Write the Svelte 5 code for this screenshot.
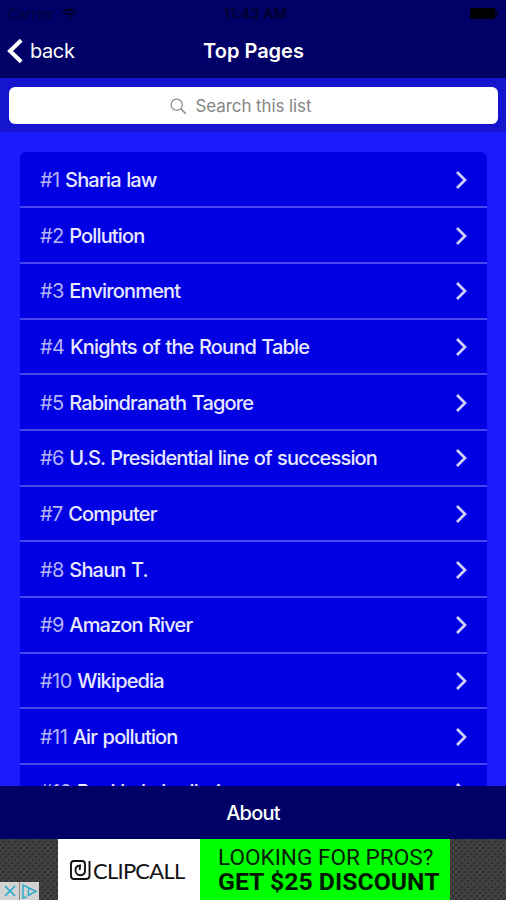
<script lang="ts">
	const pages = [
		'Sharia law',
		'Pollution',
		'Environment',
		'Knights of the Round Table',
		'Rabindranath Tagore',
		'U.S. Presidential line of succession',
		'Computer',
		'Shaun T.',
		'Amazon River',
		'Wikipedia',
		'Air pollution',
		'Rani Lakshmibai'
	];
</script>

<div class="app">
	<header>
		<div class="status">
			<div class="carrier">
				<span>Carrier</span>
				<svg width="15" height="11" viewBox="0 0 15 11">
					<path d="M0 3.4Q7.5-3 15 3.4L13.3 5.2Q7.5.4 1.7 5.2ZM2.8 6.2Q7.5 2.4 12.2 6.2L10.5 8Q7.5 5.7 4.5 8ZM5.5 8.9Q7.5 7.4 9.5 8.9L7.5 11Z" />
				</svg>
			</div>
			<span class="time">11:43 AM</span>
			<svg class="battery" width="28" height="11" viewBox="0 0 28 11">
				<rect width="25.5" height="11" rx="2" />
				<path d="M26 3.5q2 .6 2 2t-2 2z" />
			</svg>
		</div>
		<nav>
			<button class="back">
				<svg width="17" height="27" viewBox="0 0 17 27">
					<path d="M15.2 2.2 4 13 15.2 23.8" fill="none" stroke="#fff" stroke-width="4" />
				</svg>
				<span>back</span>
			</button>
			<h1>Top Pages</h1>
		</nav>
	</header>

	<div class="search">
		<div class="field">
			<svg width="17" height="17" viewBox="0 0 17 17" fill="none" stroke="#858585">
				<circle cx="6.7" cy="6.7" r="5.6" stroke-width="1.2" />
				<path d="m10.8 10.8 5 5" stroke-width="1.6" />
			</svg>
			<span>Search this list</span>
		</div>
	</div>

	<main>
		<ul>
			{#each pages as page, i (page)}
				<li>
					<span class="label"><span class="rank">#{i + 1}</span> {page}</span>
					<svg width="13" height="20" viewBox="0 0 13 20">
						<path d="m2 2 8 8-8 8" fill="none" stroke="#d0d0f8" stroke-width="2.7" />
					</svg>
				</li>
			{/each}
		</ul>
	</main>

	<footer>About</footer>

	<aside>
		<div class="mesh left">
			<div class="choices">
				<svg width="19" height="18" viewBox="0 0 19 18" fill="none" stroke="#22a9cc" stroke-width="1.6">
					<path d="m5 4 10 10M15 4 5 14" />
				</svg>
				<svg width="19" height="18" viewBox="0 0 19 18" fill="none" stroke="#22a9cc" stroke-width="1.4">
					<path d="M6.5 15 3 16V3l13 6.3-7.5 4V6.5" />
				</svg>
			</div>
		</div>
		<div class="brand">
			<svg width="21" height="21" viewBox="0 0 21 21" fill="none" stroke="#111" stroke-width="1.9">
				<path d="M19.5 1v15q0 3-3.5 3H4q-3 0-3-3V4q0-3 3-3h8q3 0 3 3v6.5c0 3-2 4.7-4.8 4.7S5.5 13 5.5 10.3s1.6-4.6 4.6-4.8c-.2 2-.6 3-.2 4.6" />
			</svg>
			<span>CLIPCALL</span>
		</div>
		<div class="offer">
			<span class="ask">LOOKING FOR PROS?</span>
			<span class="deal">GET $25 DISCOUNT</span>
		</div>
		<div class="mesh right"></div>
	</aside>
</div>

<style>
	:global(body) {
		margin: 0;
	}

	.app {
		display: flex;
		flex-direction: column;
		width: 506px;
		height: 900px;
		overflow: hidden;
		background: #1a1aff;
		color: #fff;
		font-family: Inter, 'Liberation Sans', sans-serif;
	}

	header {
		flex: none;
		height: 78px;
		background: #000066;
	}

	.status {
		display: grid;
		grid-template-columns: 1fr auto 1fr;
		align-items: center;
		height: 26px;
		padding: 0 8px;
		color: #00003a;
		fill: #00002b;
		font-size: 14px;
	}

	.carrier {
		display: flex;
		align-items: center;
		gap: 8px;
	}

	.time {
		padding-left: 5px;
		font-weight: 600;
		font-size: 14.5px;
		color: #00002e;
	}

	.battery {
		justify-self: end;
		fill: #000;
	}

	nav {
		display: grid;
		grid-template-columns: 1fr auto 1fr;
		align-items: center;
		height: 50px;
	}

	.back {
		display: flex;
		align-items: center;
		gap: 7px;
		padding: 0 0 0 6px;
		border: 0;
		background: none;
		color: inherit;
		font: inherit;
		font-size: 20px;
		letter-spacing: -0.4px;
	}

	h1 {
		margin: 0;
		padding-left: 1px;
		font-size: 20px;
		font-weight: 600;
		letter-spacing: 0;
	}

	.search {
		flex: none;
		box-sizing: border-box;
		height: 54px;
		padding: 9px 9px 8px;
		background: #1515cf;
	}

	.field {
		display: flex;
		align-items: center;
		justify-content: center;
		gap: 9px;
		height: 37px;
		margin-right: -1px;
		padding: 1px 26px 0 0;
		box-sizing: border-box;
		border-radius: 6px;
		background: #fff;
		color: #858585;
		font-size: 17px;
		letter-spacing: -0.1px;
	}

	main {
		flex: 1;
		min-height: 0;
		overflow: hidden;
		padding: 20px 19px 0 20px;
	}

	ul {
		margin: 0;
		padding: 0.8px 0 0;
		list-style: none;
		border-radius: 6px 6px 0 0;
		background: #0000e3;
	}

	li {
		display: flex;
		align-items: center;
		justify-content: space-between;
		box-sizing: border-box;
		height: 55.66px;
		padding: 1px 19px 0 20px;
		border-bottom: 2px solid #4747ec;
	}

	.label {
		font-size: 20px;
		font-weight: 500;
		letter-spacing: -0.84px;
		word-spacing: 0.9px;
		color: #e8e8ff;
		white-space: nowrap;
	}

	.rank {
		font-weight: 400;
		letter-spacing: -0.55px;
		color: #b4b4f6;
	}

	footer {
		flex: none;
		height: 53px;
		line-height: 54px;
		background: #000066;
		text-align: center;
		font-size: 20px;
		font-weight: 500;
		letter-spacing: -0.75px;
	}

	aside {
		flex: none;
		display: flex;
		height: 61px;
	}

	.mesh {
		display: flex;
		align-items: flex-end;
		background-color: #414141;
		background-image: radial-gradient(#303030 1px, transparent 1.6px),
			radial-gradient(#303030 1px, transparent 1.6px);
		background-size: 6px 6px;
		background-position: 0 0, 3px 3px;
	}

	.left {
		width: 58px;
	}

	.right {
		flex: 1;
	}

	.choices {
		display: flex;
		gap: 1px;
		background: #888;
	}

	.choices svg {
		background: #d2d2d2;
	}

	.brand {
		display: flex;
		align-items: center;
		gap: 2px;
		box-sizing: border-box;
		width: 142px;
		padding: 2px 0 0 12px;
		background: #fff;
		color: #111;
		font-family: Lato, sans-serif;
		font-size: 22px;
		letter-spacing: -0.75px;
	}

	.offer {
		display: flex;
		flex-direction: column;
		box-sizing: border-box;
		width: 250px;
		padding: 6px 0 0 18px;
		background: #00ff00;
		color: #052005;
		font-family: Roboto, sans-serif;
		line-height: 25px;
		white-space: nowrap;
	}

	.ask {
		font-size: 22.6px;
	}

	.deal {
		font-size: 24.8px;
		line-height: 24px;
		font-weight: 700;
		color: #001a00;
	}
</style>
